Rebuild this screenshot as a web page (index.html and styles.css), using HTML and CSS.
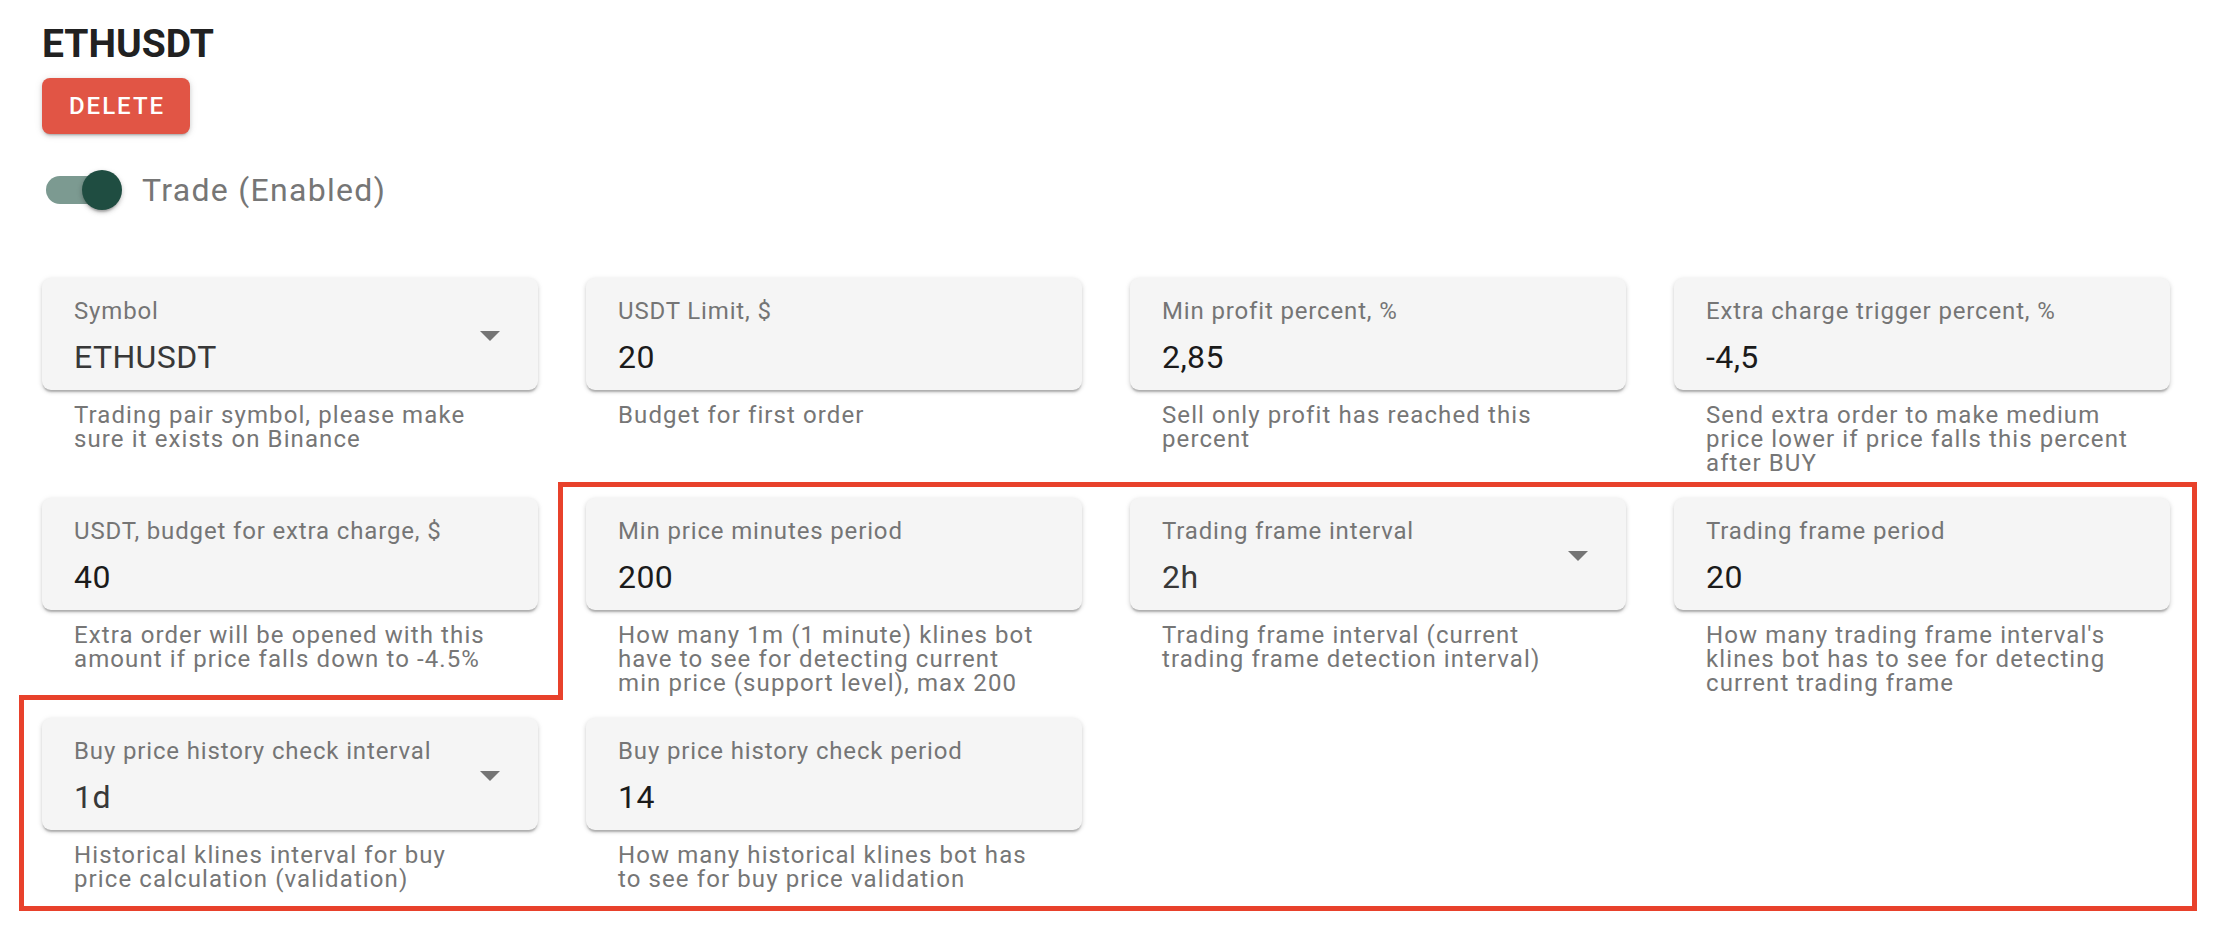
FILE: index.html
```html
<!DOCTYPE html>
<html lang="en">
<head>
<meta charset="utf-8">
<title>ETHUSDT</title>
<link rel="stylesheet" href="styles.css">
</head>
<body>
<div class="page">
  <h1 class="title">ETHUSDT</h1>
  <button class="btn-delete">DELETE</button>
  <div class="toggle-row">
    <span class="switch"><span class="track"></span><span class="thumb"></span></span>
    <span class="toggle-label">Trade (Enabled)</span>
  </div>

  <div class="grid">
    <div class="field">
      <div class="box select">
        <div class="box-text"><div class="label">Symbol</div><div class="value sel">ETHUSDT</div></div>
        <svg class="arrow" viewBox="0 0 24 24" width="48" height="48"><path d="M7 10l5 5 5-5z"/></svg>
      </div>
      <div class="helper">Trading pair symbol, please make<br>sure it exists on Binance</div>
    </div>
    <div class="field">
      <div class="box">
        <div class="box-text"><div class="label">USDT Limit, $</div><div class="value">20</div></div>
      </div>
      <div class="helper">Budget for first order</div>
    </div>
    <div class="field">
      <div class="box">
        <div class="box-text"><div class="label">Min profit percent, %</div><div class="value">2,85</div></div>
      </div>
      <div class="helper">Sell only profit has reached this<br>percent</div>
    </div>
    <div class="field">
      <div class="box">
        <div class="box-text"><div class="label">Extra charge trigger percent, %</div><div class="value">-4,5</div></div>
      </div>
      <div class="helper">Send extra order to make medium<br>price lower if price falls this percent<br>after BUY</div>
    </div>

    <div class="field">
      <div class="box">
        <div class="box-text"><div class="label">USDT, budget for extra charge, $</div><div class="value">40</div></div>
      </div>
      <div class="helper">Extra order will be opened with this<br>amount if price falls down to -4.5%</div>
    </div>
    <div class="field">
      <div class="box">
        <div class="box-text"><div class="label">Min price minutes period</div><div class="value">200</div></div>
      </div>
      <div class="helper">How many 1m (1 minute) klines bot<br>have to see for detecting current<br>min price (support level), max 200</div>
    </div>
    <div class="field">
      <div class="box select">
        <div class="box-text"><div class="label">Trading frame interval</div><div class="value sel">2h</div></div>
        <svg class="arrow" viewBox="0 0 24 24" width="48" height="48"><path d="M7 10l5 5 5-5z"/></svg>
      </div>
      <div class="helper">Trading frame interval (current<br>trading frame detection interval)</div>
    </div>
    <div class="field">
      <div class="box">
        <div class="box-text"><div class="label">Trading frame period</div><div class="value">20</div></div>
      </div>
      <div class="helper">How many trading frame interval's<br>klines bot has to see for detecting<br>current trading frame</div>
    </div>

    <div class="field">
      <div class="box select">
        <div class="box-text"><div class="label">Buy price history check interval</div><div class="value sel">1d</div></div>
        <svg class="arrow" viewBox="0 0 24 24" width="48" height="48"><path d="M7 10l5 5 5-5z"/></svg>
      </div>
      <div class="helper">Historical klines interval for buy<br>price calculation (validation)</div>
    </div>
    <div class="field">
      <div class="box">
        <div class="box-text"><div class="label">Buy price history check period</div><div class="value">14</div></div>
      </div>
      <div class="helper">How many historical klines bot has<br>to see for buy price validation</div>
    </div>
  </div>

  <svg class="highlight" width="2226" height="930" viewBox="0 0 2226 930">
    <path d="M560.5 484.5 H2194.5 V908.5 H21.5 V697.5 H560.5 Z"/>
  </svg>
</div>
</body>
</html>
```

FILE: styles.css
```css
html, body {
  margin: 0;
  padding: 0;
  background: #ffffff;
}

body {
  font-family: Roboto, "Liberation Sans", Arial, sans-serif;
  width: 2226px;
  height: 930px;
  overflow: hidden;
}

.page {
  position: relative;
  padding: 20px 0 0 42px;
  display: flex;
  flex-direction: column;
  align-items: flex-start;
  height: 930px;
  box-sizing: border-box;
}

.title {
  margin: 0;
  font-size: 39px;
  line-height: 48px;
  font-weight: 700;
  color: #212121;
}

.btn-delete {
  margin-top: 10px;
  width: 148px;
  height: 56px;
  border: none;
  border-radius: 8px;
  background: #e15545;
  color: #ffffff;
  font-family: Roboto, "Liberation Sans", Arial, sans-serif;
  font-size: 24px;
  font-weight: 500;
  letter-spacing: 2px;
  padding: 0 0 0 2px;
  box-shadow: 0 3px 2px -2px rgba(0,0,0,.2), 0 2px 4px rgba(0,0,0,.14), 0 1px 8px rgba(0,0,0,.1);
}

.toggle-row {
  margin-top: 18px;
  height: 76px;
  display: flex;
  align-items: center;
  gap: 16px;
}

.switch {
  position: relative;
  display: block;
  width: 80px;
  height: 40px;
  margin-left: 4px;
}

.track {
  position: absolute;
  left: 0;
  top: 6px;
  width: 68px;
  height: 28px;
  border-radius: 14px;
  background: #7c9a91;
}

.thumb {
  position: absolute;
  left: 36px;
  top: 0;
  width: 40px;
  height: 40px;
  border-radius: 50%;
  background: #1f4d41;
  box-shadow: 0 4px 2px -2px rgba(0,0,0,.2), 0 2px 4px rgba(0,0,0,.14), 0 2px 6px rgba(0,0,0,.12);
}

.toggle-label {
  font-size: 32px;
  color: #767676;
  letter-spacing: 1.3px;
}

.grid {
  margin-top: 50px;
  display: grid;
  grid-template-columns: repeat(4, 496px);
  grid-template-rows: repeat(3, 197px);
  column-gap: 48px;
  row-gap: 23px;
}

.field {
  display: flex;
  flex-direction: column;
}

.box {
  height: 112px;
  box-sizing: border-box;
  background: #f5f5f5;
  border-radius: 9px;
  padding-left: 32px;
  display: flex;
  align-items: center;
  box-shadow: 0 3px 2px -1px rgba(0,0,0,.22), 0 2px 4px rgba(0,0,0,.12), 0 1px 6px rgba(0,0,0,.08);
}

.box-text {
  flex: 1;
  align-self: stretch;
}

.label {
  margin-top: 21px;
  font-size: 24px;
  line-height: 24px;
  color: #757575;
  letter-spacing: 0.85px;
  white-space: nowrap;
}

.value {
  margin-top: 18px;
  font-size: 32px;
  line-height: 32px;
  color: #1b1b1b;
  letter-spacing: 0.4px;
}

.value.sel {
  color: #383838;
}

.arrow {
  fill: #757575;
  margin-right: 24px;
  margin-top: 2px;
}

.helper {
  margin: 13px 32px 0 32px;
  font-size: 24px;
  line-height: 24px;
  color: #767676;
  letter-spacing: 1.1px;
  white-space: nowrap;
}

.highlight {
  position: absolute;
  left: 0;
  top: 0;
  pointer-events: none;
}

.highlight path {
  fill: none;
  stroke: #e8412b;
  stroke-width: 5;
  stroke-linejoin: miter;
}
```
